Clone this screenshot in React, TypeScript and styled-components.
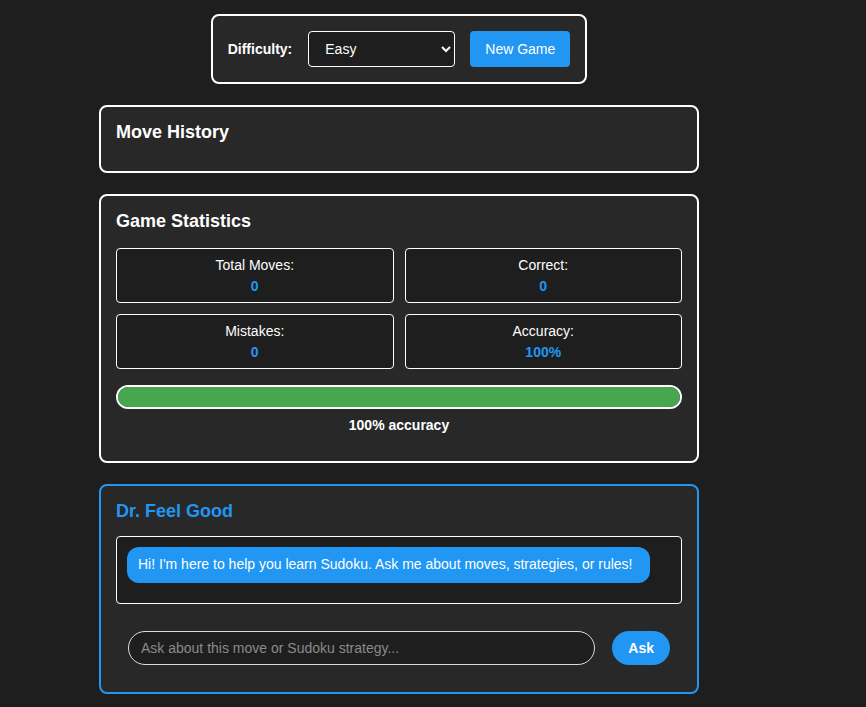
import React from "react";
import styled, { createGlobalStyle } from "styled-components";

const GlobalStyle = createGlobalStyle`
    body {
        margin: 0;
        background-color: #1e1e1e;
        font-family: "Liberation Sans", Arial, sans-serif;
        color: white;
    }
`;

const Page = styled.div`
    display: flex;
    justify-content: flex-start;
    padding: 14px 0 0 99px;
`;

const Column = styled.div`
    display: flex;
    flex-direction: column;
    align-items: center;
    gap: 21px;
    width: 600px;
`;

const Panel = styled.div<{ accent?: string }>`
    box-sizing: border-box;
    width: 100%;
    padding: 15px;
    background-color: #282828;
    border: 2px solid ${props => props.accent || "white"};
    border-radius: 8px;
`;

const Controls = styled.div`
    display: flex;
    align-items: center;
    gap: 15px;
    padding: 15px;
    background-color: #282828;
    border: 2px solid white;
    border-radius: 8px;
`;

const Label = styled.label`
    font-size: 14px;
    font-weight: 700;
    margin-right: 1px;
`;

const Select = styled.select`
    width: 147px;
    height: 36px;
    padding: 0 12px;
    font-family: inherit;
    font-size: 14px;
    color: white;
    background-color: #1e1e1e;
    border: 1px solid white;
    border-radius: 4px;
`;

const BlueButton = styled.button<{ round?: boolean }>`
    height: ${props => props.round ? "34px" : "36px"};
    padding: 0 ${props => props.round ? "16px" : "15px"};
    font-family: inherit;
    font-size: 14px;
    font-weight: ${props => props.round ? 700 : 400};
    color: white;
    background-color: #2196f3;
    border: none;
    border-radius: ${props => props.round ? "17px" : "4px"};
    cursor: pointer;
`;

const Title = styled.h3<{ color?: string; gap?: number }>`
    margin: 0 0 ${props => props.gap ?? 16}px;
    font-size: 18px;
    line-height: 21px;
    font-weight: 700;
    color: ${props => props.color || "white"};
`;

const StatGrid = styled.div`
    display: grid;
    grid-template-columns: repeat(2, 1fr);
    column-gap: 11px;
    row-gap: 11px;
`;

const StatCard = styled.div`
    display: flex;
    flex-direction: column;
    align-items: center;
    gap: 4px;
    padding: 8px 0 7px;
    font-size: 14px;
    line-height: 17px;
    background-color: #1e1e1e;
    border: 1px solid white;
    border-radius: 4px;
`;

const StatValue = styled.span`
    font-weight: 700;
    color: #2196f3;
`;

const Bar = styled.div`
    box-sizing: border-box;
    height: 24px;
    margin-top: 16px;
    background-color: #3a3a3a;
    border: 2px solid white;
    border-radius: 12px;
    overflow: hidden;
`;

const BarFill = styled.div`
    height: 100%;
    background-color: #48a64f;
`;

const BarText = styled.div`
    margin: 8px 0 12px;
    text-align: center;
    font-size: 14px;
    line-height: 17px;
    font-weight: 700;
`;

const ChatBox = styled.div`
    height: 68px;
    box-sizing: border-box;
    padding: 10px;
    background-color: #1e1e1e;
    border: 1px solid white;
    border-radius: 4px;
`;

const Bubble = styled.div`
    display: inline-block;
    padding: 9px 18px 10px 11px;
    font-size: 14px;
    line-height: 17px;
    background-color: #2196f3;
    border-radius: 12px;
`;

const AskRow = styled.div`
    display: flex;
    align-items: center;
    gap: 17px;
    padding: 27px 12px 12px;
`;

const AskInput = styled.input`
    flex: 1;
    height: 34px;
    box-sizing: border-box;
    padding: 0 12px;
    font-family: inherit;
    font-size: 14px;
    color: white;
    background-color: #1e1e1e;
    border: 1px solid #dddddd;
    border-radius: 17px;
    outline: none;

    &::placeholder {
        color: #8a8a8a;
    }
`;

export default function App() {
    const accuracy = 100;

    return (
        <>
            <GlobalStyle />
            <Page>
                <Column>
                    <Controls>
                        <Label>Difficulty:</Label>
                        <Select defaultValue="easy">
                            <option value="easy">Easy</option>
                            <option value="medium">Medium</option>
                            <option value="hard">Hard</option>
                        </Select>
                        <BlueButton>New Game</BlueButton>
                    </Controls>

                    <Panel>
                        <Title gap={13}>Move History</Title>
                    </Panel>

                    <Panel>
                        <Title>Game Statistics</Title>
                        <StatGrid>
                            <StatCard>Total Moves:<StatValue>0</StatValue></StatCard>
                            <StatCard>Correct:<StatValue>0</StatValue></StatCard>
                            <StatCard>Mistakes:<StatValue>0</StatValue></StatCard>
                            <StatCard>Accuracy:<StatValue>100%</StatValue></StatCard>
                        </StatGrid>
                        <Bar>
                            <BarFill style={{ width: `${accuracy}%` }} />
                        </Bar>
                        <BarText>{accuracy}% accuracy</BarText>
                    </Panel>

                    <Panel accent="#2196f3">
                        <Title color="#2196f3" gap={14}>Dr. Feel Good</Title>
                        <ChatBox>
                            <Bubble>Hi! I'm here to help you learn Sudoku. Ask me about moves, strategies, or rules!</Bubble>
                        </ChatBox>
                        <AskRow>
                            <AskInput placeholder="Ask about this move or Sudoku strategy..." />
                            <BlueButton round>Ask</BlueButton>
                        </AskRow>
                    </Panel>
                </Column>
            </Page>
        </>
    );
}
